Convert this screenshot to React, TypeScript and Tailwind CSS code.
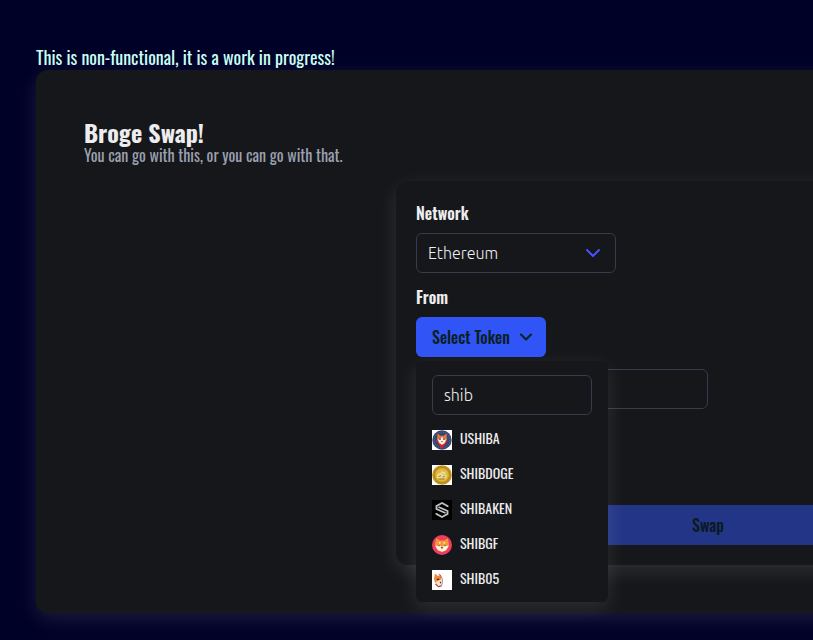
import { ReactNode, useState } from "react";
import { ChevronDown } from "lucide-react";

const UshibaIcon = () => (
  <svg viewBox="0 0 20 20" className="size-5 shrink-0">
    <rect width="20" height="20" fill="#fff" />
    <circle cx="10" cy="10" r="9.7" fill="#34456f" />
    <circle cx="10" cy="10" r="7.8" fill="none" stroke="#66749a" strokeWidth="1" strokeDasharray="1 1.2" />
    <path d="M4 11 10 18.5 16 11l-2 .5h-8z" fill="#d3202c" />
    <path d="m5.6 3.6 2.7 2.2h3.4l2.7-2.2.6 5.9-2.2 4L10 15.2l-2.8-1.7L5 9.5z" fill="#e27a45" />
    <path d="m5.8 9.6 2.9-.4L10 6.4l1.3 2.8 2.9.4-1.8 3.4L10 14.6 7.6 13z" fill="#fbf0e8" />
    <path d="M7.3 8.7h1.4v1H7.3zm4 0h1.4v1h-1.4zM9.2 11h1.6l-.8 1.2z" fill="#2b2430" />
  </svg>
);

const ShibDogeIcon = () => (
  <svg viewBox="0 0 20 20" className="size-5 shrink-0">
    <rect width="20" height="20" fill="#fff" />
    <circle cx="10" cy="10" r="9.8" fill="#c4921c" />
    <circle cx="10" cy="10" r="7.4" fill="#dcb93f" stroke="#a37c1c" strokeWidth="0.8" />
    <path d="m5 11 1-2.5 2.5-.5L10 5.5l1.2 1.7 2-1 .8 3 .8 1.8-1.3 2.5H7.5L5 13z" fill="#f0dd92" />
    <path d="m6.5 11.5 2.5-.8M10.5 9l.8.4m1.5-.4.6.3M10.5 12l2.5-.5M6.5 14h6" fill="none" stroke="#98752a" strokeWidth="0.9" />
  </svg>
);

const ShibakenIcon = () => (
  <svg viewBox="0 0 20 20" className="size-5 shrink-0">
    <rect width="20" height="20" fill="#000" />
    <path d="M15.5 7V6L10 3 4.5 6v3l5.5 2.5 3.5 1.5M4.5 13v1l5.5 3 5.5-3v-3L10 8.5 6.5 7" fill="none" stroke="#bfc0c2" strokeWidth="1.9" />
  </svg>
);

const ShibGfIcon = () => (
  <svg viewBox="0 0 20 20" className="size-5 shrink-0">
    <circle cx="10" cy="10" r="10" fill="#ee3c62" />
    <path d="M4.2 3.2 8 5.6h4l3.8-2.4 1.4 7.3-2.7 4.7L10 17l-4.5-1.8-2.7-4.7z" fill="#f7992d" />
    <path d="m3.4 11 3.4-1L10 12l3.2-2 3.4 1-2.6 4.2-4 1.6-4-1.6z" fill="#fff3df" />
    <path d="M5.5 10.2c1 .8 1.7.8 2.5.2m4 0c.8.6 1.5.6 2.5-.2M9 12.6h2l-1 1z" fill="#6b3524" stroke="#6b3524" strokeWidth="0.6" />
    <circle cx="7.7" cy="7.8" r="0.9" fill="#fff3df" />
    <circle cx="12.3" cy="7.8" r="0.9" fill="#fff3df" />
  </svg>
);

const Shib05Icon = () => (
  <svg viewBox="0 0 20 20" className="size-5 shrink-0">
    <rect width="20" height="20" fill="#fff" />
    <path d="M3 3.5 6 6l3-1.5v11L6.5 15 3 12.5 2 9z" fill="#ed8931" />
    <path d="M6.5 4c3.8 1.5 5 8 2.5 12.5" fill="none" stroke="#a64a42" strokeWidth="0.8" />
    <path d="M3.5 12 6 11l3-1.8v6.5l-3-.5z" fill="#f6e6d7" />
    <path d="M5 8.8h2.2V10H5zM7.7 11.8H9v1.4H8z" fill="#41251c" />
    <path d="m3.5 14 3 2.6 2.7-.6" fill="none" stroke="#a83a36" strokeWidth="1.1" />
  </svg>
);

const tokens: { symbol: string; icon: ReactNode }[] = [
  { symbol: "USHIBA", icon: <UshibaIcon /> },
  { symbol: "SHIBDOGE", icon: <ShibDogeIcon /> },
  { symbol: "SHIBAKEN", icon: <ShibakenIcon /> },
  { symbol: "SHIBGF", icon: <ShibGfIcon /> },
  { symbol: "SHIB05", icon: <Shib05Icon /> },
];

const fieldClass =
  "h-10 rounded-md border border-[#393a4b] bg-[#16171a] px-[11px] font-['Ubuntu','Open_Sans',sans-serif] text-base font-light text-[#ededef] outline-none";

const glowClass = "shadow-[0_6px_20px_rgba(255,255,255,0.11)]";

const TokenMenu = () => {
  const [search, setSearch] = useState("shib");

  return (
    <div
      className={`absolute top-full left-0 z-10 mt-1 w-48 rounded-md bg-[#16171a] px-4 pt-[14px] pb-3 ${glowClass}`}
    >
      <input
        aria-label="Search tokens"
        className={`${fieldClass} w-full`}
        value={search}
        onChange={(e) => setSearch(e.target.value)}
      />
      <ul className="mt-[15px] flex flex-col gap-[15px]">
        {tokens.map(({ symbol, icon }) => (
          <li key={symbol}>
            <button className="flex h-5 w-full items-start gap-2 text-sm leading-4 text-[#ededef]">
              {icon}
              {symbol}
            </button>
          </li>
        ))}
      </ul>
    </div>
  );
};

const SwapForm = () => {
  const [open, setOpen] = useState(true);
  const [amount, setAmount] = useState("");

  return (
    <div
      className={`mx-auto mt-[17px] flex w-1/2 max-w-[624px] flex-col items-start rounded-xl bg-[#16171a] p-5 ${glowClass}`}
    >
      <label htmlFor="network" className="text-base font-semibold">
        Network
      </label>
      <div className="relative mt-2">
        <select id="network" className={`${fieldClass} w-[200px] appearance-none`}>
          <option>Ethereum</option>
        </select>
        <ChevronDown className="pointer-events-none absolute top-2 right-[11px] size-6 text-[#4353ff]" />
      </div>
      <label htmlFor="from" className="mt-3 text-base font-semibold">
        From
      </label>
      <div className="relative mt-2">
        <button
          id="from"
          className="flex h-10 w-[130px] items-center justify-between rounded-md bg-[#3054f5] pr-[10px] pl-4 text-base font-medium text-[#0a211f]"
          onClick={() => setOpen(!open)}
        >
          Select Token
          <ChevronDown className="size-5" strokeWidth={2.5} />
        </button>
        {open && <TokenMenu />}
      </div>
      <input
        aria-label="Amount"
        className={`${fieldClass} mt-3 w-[292px]`}
        value={amount}
        onChange={(e) => setAmount(e.target.value)}
      />
      <button className="mt-24 h-10 w-full rounded-md bg-[#233587] text-base font-medium text-[#0a1a1f]">
        Swap
      </button>
    </div>
  );
};

export default function App() {
  return (
    <div className="min-h-screen overflow-hidden bg-[#000127] px-9 pt-[45px] pb-7 font-['Oswald',sans-serif] text-[#ededef]">
      <div className="min-w-[1344px]">
        <p className="pb-px text-lg leading-6 text-[#c8fff4]">
          This is non-functional, it is a work in progress!
        </p>
        <main className={`rounded-xl bg-[#16171a] p-12 ${glowClass}`}>
          <h1 className="text-2xl leading-7 font-bold">Broge Swap!</h1>
          <p className="text-base leading-[18px] text-[#9ba1b0]">
            You can go with this, or you can go with that.
          </p>
          <SwapForm />
        </main>
      </div>
    </div>
  );
}
